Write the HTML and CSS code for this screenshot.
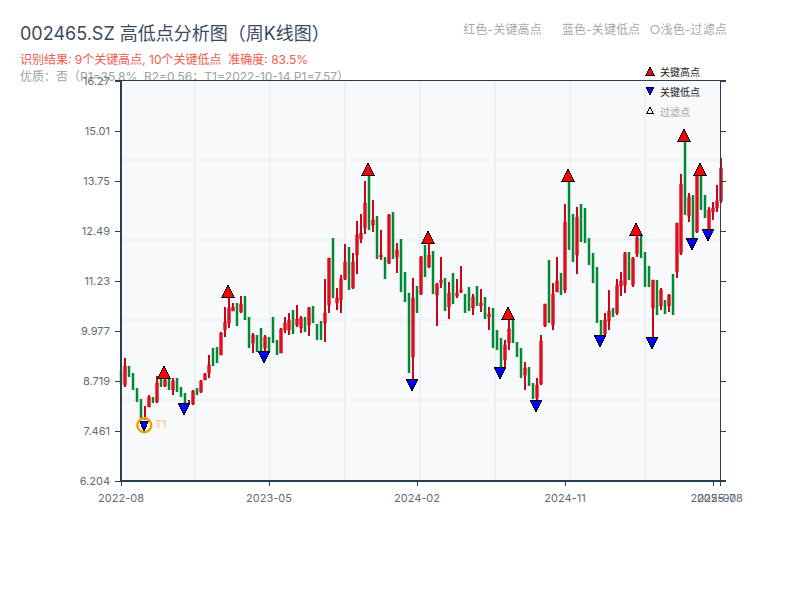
FILE: index.html
```html
<!DOCTYPE html>
<html lang="zh-CN">
  <head>
    <meta charset="UTF-8" />
    <title>002465.SZ 高低点分析图</title>
    <link rel="stylesheet" href="styles.css">
  </head>

  <body>
    <header class="header">
      <div class="header-top">
        <h1>002465.SZ 高低点分析图（周K线图）</h1>
        <div class="hints">
          <span>红色-关键高点</span>
          <span>蓝色-关键低点</span>
          <span>○浅色-过滤点</span>
        </div>
      </div>
      <p class="result">识别结果: 9个关键高点, 10个关键低点 &nbsp;准确度: 83.5%</p>
      <p class="quality">优质：否（P1=35.8%&nbsp; R2=0.56；T1=2022-10-14 P1=7.57）</p>
    </header>

    <svg id="chart" class="chart" viewBox="0 70 800 530" width="800" height="530"></svg>

    <script src="chart.js"></script>
  </body>
</html>
```

FILE: styles.css
```css
:root {
  --title: #3a4a5c;
  --red-text: #ef5a4c;
  --muted: #9aa3a8;
  --hint: #a3a9ae;
  --axis: #2c3e50;
  --label: #5f6b78;
  --plot-bg: #f8f9fb;
  --grid: #e6e9ee;
  --candle-red: #cc0418;
  --candle-red-body: #e2101c;
  --candle-green: #008a36;
}

* {
  margin: 0;
  padding: 0;
  box-sizing: border-box;
}

body {
  width: 800px;
  height: 600px;
  overflow: hidden;
  background: #ffffff;
  font-family: Inter, "Noto Sans CJK SC", sans-serif;
}

.header {
  height: 70px;
  padding: 23px 73px 0 20px;
}

.header-top {
  display: flex;
  justify-content: space-between;
  height: 26px;
}

h1 {
  font-size: 18px;
  font-weight: 400;
  line-height: 22px;
  color: var(--title);
}

.hints {
  display: flex;
  gap: 20px;
  font-size: 12px;
  line-height: 14px;
  letter-spacing: 0.15px;
  color: var(--hint);
}

.hints span:last-child {
  margin-left: -11px;
}

.result {
  margin-top: 2px;
  font-size: 12px;
  line-height: 18px;
  color: var(--red-text);
}

.quality {
  font-size: 12px;
  line-height: 16px;
  color: var(--muted);
  white-space: nowrap;
}

.chart {
  display: block;
  overflow: visible;
}

.plot {
  fill: var(--plot-bg);
}

.grid {
  stroke: var(--grid);
  stroke-width: 1.2;
}

.axis {
  stroke: var(--axis);
  stroke-width: 1;
}

.axis-main {
  stroke-width: 2;
}

.tick-label {
  font-size: 11px;
  fill: var(--label);
}

.wick-red {
  fill: var(--candle-red);
}

.body-red {
  fill: var(--candle-red-body);
  stroke: var(--candle-red);
  stroke-width: 0.6;
}

.body-green {
  fill: var(--candle-green);
}

.marker {
  stroke: #000000;
  stroke-width: 1;
  shape-rendering: crispEdges;
}

.marker-high {
  fill: #ff0000;
}

.marker-low {
  fill: #0000ff;
}

.marker-filtered {
  fill: #ffe8e8;
}

.t1-ring {
  fill: none;
  stroke: #f39c12;
  stroke-width: 2.4;
}

.t1-label {
  font-size: 11px;
  fill: #f7c278;
}

.legend-label {
  font-size: 10px;
  fill: #222222;
}

.legend-label.filtered {
  fill: #a0a0a0;
}
```

FILE: chart.js
```js
const svg = document.getElementById("chart");
const NS = "http://www.w3.org/2000/svg";

function add(tag, attrs, text) {
  const el = document.createElementNS(NS, tag);
  for (const key in attrs) el.setAttribute(key, attrs[key]);
  if (text !== undefined) el.textContent = text;
  svg.appendChild(el);
  return el;
}

// weekly candles in plot pixels: colour, high, low, body top, body bottom
const candles = [
  ["g",371,384],["r",358,387,366,385],["g",366,377],["g",373,390],["g",388,402],["g",399,418],
  ["r",406,420],["r",395,407,397,407],["g",397,403],["r",376,403,383,402],["g",378,387],["r",378,387,380,386],
  ["g",379,390],["r",378,395,381,390],["g",378,392],["g",387,397],["g",393,405],["r",400,405],
  ["r",390,405,391,404],["g",388,395],["r",380,393,381,392],["r",373,380,374,380],["r",355,378,365,373],["g",348,366],
  ["g",347,363],["r",332,355,333,355],["r",307,337,322,330],["r",298,328,308,323],["r",303,311,307,311],["g",303,326],
  ["r",296,313,304,312],["g",296,320],["g",317,348],["r",333,353,335,343],["g",335,352],["g",328,352],
  ["r",335,352,337,348],["g",337,352],["g",317,343],["g",340,355],["r",328,353,329,353],["r",317,333,323,330],
  ["r",313,335,320,330],["g",310,334],["r",305,327,319,325],["r",316,333,318,328],["g",317,332],["r",307,336,308,325],
  ["g",306,323],["g",324,340],["g",321,340],["r",279,342,313,323],["r",258,313,258,305],["g",238,298],
  ["r",288,310,298,303],["r",275,313,279,300],["r",244,280,262,279],["g",247,290],["r",253,289,262,288],["r",221,274,235,255],
  ["r",214,243,233,239],["r",181,234,203,228],["g",175,230],["r",200,232,220,225],["g",216,259],["r",230,260,255,257],
  ["g",257,279],["r",214,264,215,263],["g",212,259],["r",243,273,250,257],["g",239,292],["g",272,302],
  ["g",293,373,293,357],["r",278,380,298,357],["g",286,313],["r",256,295,257,294],["g",245,277],["r",241,268,255,267],
  ["g",251,294],["r",283,326,284,295],["r",257,288,280,283],["g",278,311],["r",282,319,293,307],["g",273,304],
  ["r",279,298,293,296],["r",266,293,290,292],["g",294,313],["g",287,311],["r",294,315,297,308],["g",286,306],
  ["r",289,312,303,306],["g",297,319],["r",307,330,314,317],["g",308,348],["g",330,350],["g",338,367],
  ["r",340,367,345,360],["r",319,350,329,343],["g",319,343],["g",342,357],["g",348,378],["r",362,390,368,375],
  ["g",367,386],["g",383,399],["r",378,400,385,398],["r",335,385,341,384],["r",304,327,304,326],["g",260,323],
  ["r",283,330,294,325],["r",257,292,281,292],["g",273,295],["r",204,293,222,290],["g",181,250],["g",214,262],
  ["r",207,274,217,255],["g",204,242],["g",208,243],["g",238,265],["g",253,283],["g",267,323],
  ["g",320,336],["r",313,335,320,334],["r",290,330,311,321],["g",308,317],["r",279,315,285,313],["r",272,296,281,286],
  ["r",252,293,253,285],["g",252,280],["r",257,287,258,285],["r",236,257,238,254],["g",235,258],["g",252,287],
  ["g",266,287],["r",280,337,280,308],["g",280,315],["r",288,310,290,306],["g",300,314],["r",294,312,295,306],
  ["g",274,315],["r",223,278,223,272],["r",174,255,184,253],["g",140,215],["r",193,222,197,216],["g",195,238],
  ["r",175,233,176,232],["g",175,210],["g",195,218],["r",207,230,210,230],["r",202,220,208,212],["r",185,212,201,208],
  ["r",158,203,168,201]
];

const highs = [[164,378],[228,297],[368,175],[428,243],[508,319],[568,181],[636,235],[684,141],[700,175]];
const lows = [[144,421],[184,403],[264,351],[412,379],[500,367],[536,400],[600,335],[652,337],[692,238],[708,229]];

const priceLabels = ["16.27","15.01","13.75","12.49","11.23","9.977","8.719","7.461","6.204"];
const dateTicks = [[121,"2022-08"],[269,"2023-05"],[417,"2024-02"],[565,"2024-11"],[713,"2025-07"],[720,"2025-08"]];

// plot and grid
add("rect", { class: "plot", x: 121, y: 80, width: 599, height: 400 });
for (let x = 195; x < 720; x += 75) {
  add("line", { class: "grid", x1: x, y1: 81, x2: x, y2: 480 });
}
for (let y = 160; y < 480; y += 80) {
  add("line", { class: "grid", x1: 122, y1: y, x2: 720, y2: y });
}

// candles
candles.forEach((c, i) => {
  const x = 120 + i * 4;
  const [color, high, low, top, bottom] = c;
  if (color === "g") {
    add("rect", { class: "body-green", x: x - 0.25, y: high, width: 2.5, height: low - high });
  } else {
    add("rect", { class: "wick-red", x: x, y: high, width: 2, height: low - high });
    add("rect", { class: "body-red", x: x - 0.25, y: top, width: 2.5, height: bottom - top });
  }
});

// axes
add("line", { class: "axis", x1: 115, y1: 80.5, x2: 726, y2: 80.5 });
add("line", { class: "axis", x1: 720.5, y1: 80, x2: 720.5, y2: 481 });
add("line", { class: "axis axis-main", x1: 121, y1: 80, x2: 121, y2: 482 });
add("line", { class: "axis axis-main", x1: 120, y1: 481, x2: 726, y2: 481 });

priceLabels.forEach((label, i) => {
  const y = 81 + i * 50;
  add("line", { class: "axis", x1: 115, y1: y + 0.5, x2: 121, y2: y + 0.5 });
  add("line", { class: "axis", x1: 720, y1: y + 0.5, x2: 726, y2: y + 0.5 });
  add("text", { class: "tick-label", x: 110, y: y + 4, "text-anchor": "end" }, label);
});

dateTicks.forEach(([x, label]) => {
  add("line", { class: "axis", x1: x + 0.5, y1: 481, x2: x + 0.5, y2: 486 });
  add("text", { class: "tick-label", x: x, y: 502, "text-anchor": "middle" }, label);
});

// markers
function triangleUp(cls, x, base, w, h) {
  add("polygon", { class: "marker " + cls, points: `${x - w / 2},${base} ${x + w / 2},${base} ${x},${base - h}` });
}

function triangleDown(cls, x, base, w, h) {
  add("polygon", { class: "marker " + cls, points: `${x - w / 2},${base} ${x + w / 2},${base} ${x},${base + h}` });
}

highs.forEach(([x, base]) => triangleUp("marker-high", x, base, 12, 12));
lows.forEach(([x, base]) => {
  if (x === 144) triangleDown("marker-low", x, base, 9, 10);
  else triangleDown("marker-low", x, base, 12, 12);
});

add("circle", { class: "t1-ring", cx: 144.3, cy: 425.3, r: 7 });
add("text", { class: "t1-label", x: 155, y: 428 }, "T1");

// legend
triangleUp("marker-high", 650, 75, 8, 8);
add("text", { class: "legend-label", x: 660, y: 76 }, "关键高点");
triangleDown("marker-low", 650, 87, 8, 8);
add("text", { class: "legend-label", x: 660, y: 96 }, "关键低点");
triangleUp("marker-filtered", 650, 113, 6, 6);
add("text", { class: "legend-label filtered", x: 660, y: 116 }, "过滤点");
```
